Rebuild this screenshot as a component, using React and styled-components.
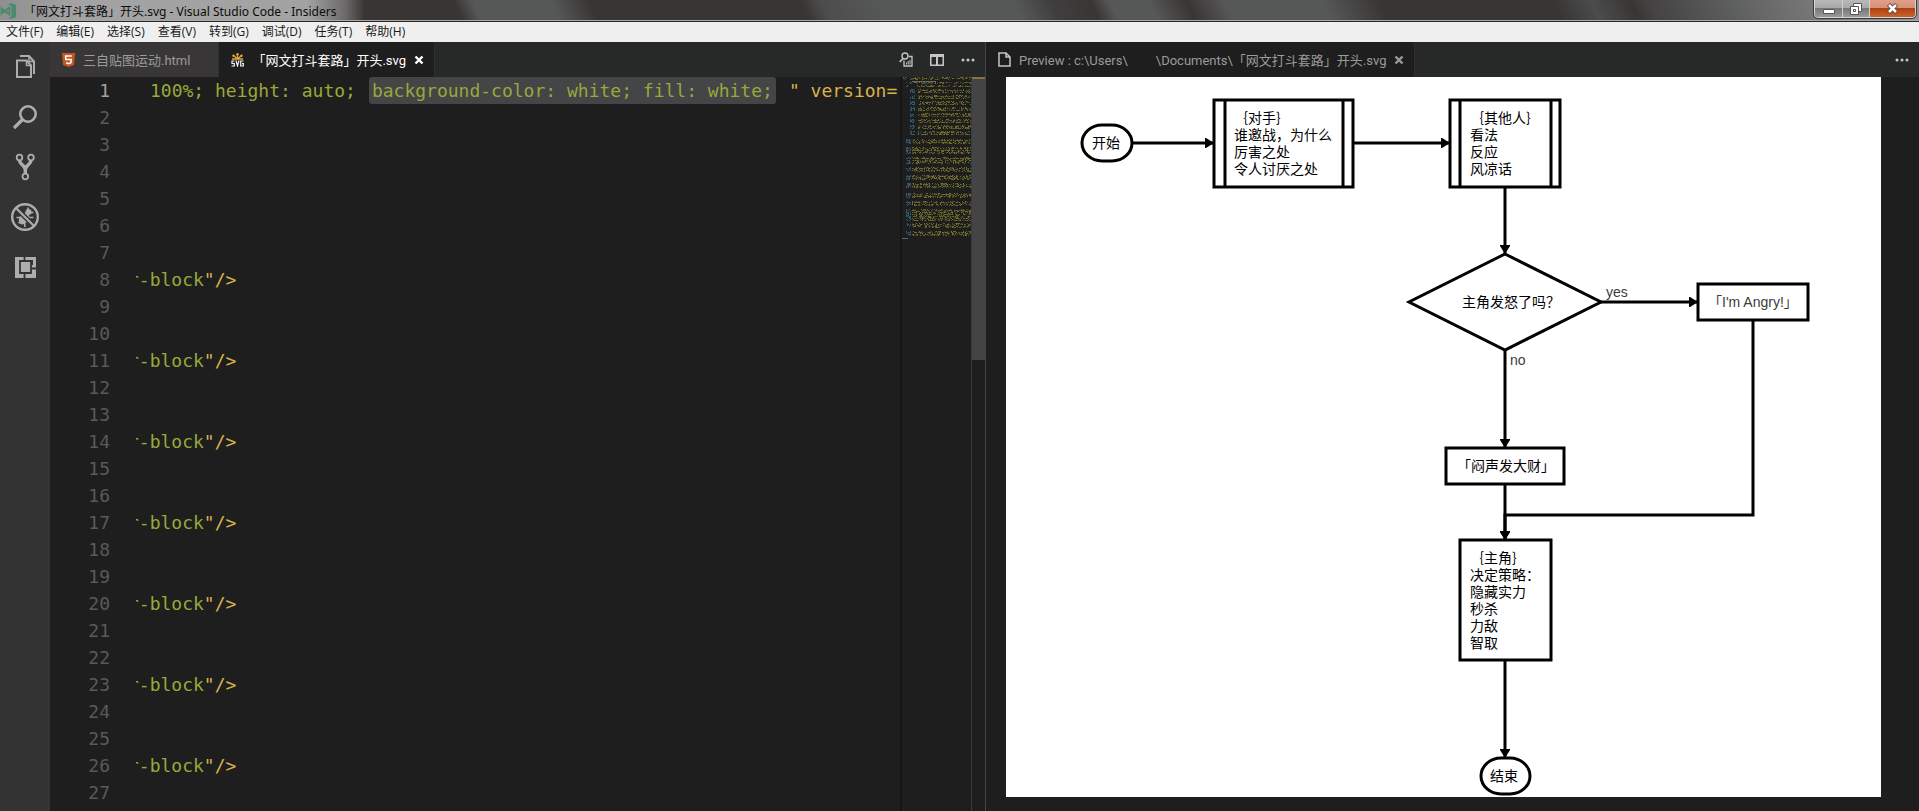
import React from 'react';
import styled, { createGlobalStyle } from 'styled-components';

const GlobalStyle = createGlobalStyle`
  * {
    box-sizing: border-box;
  }

  body {
    margin: 0;
    background: #1e1e1e;
    font-family: 'Open Sans', 'Noto Sans CJK SC', sans-serif;
    font-size: 13px;
  }

  button {
    margin: 0;
    padding: 0;
    border: 0;
    background: none;
    color: inherit;
    font: inherit;
    cursor: pointer;
  }

  svg {
    display: block;
  }
`;

const Window = styled.div`
  display: flex;
  flex-direction: column;
  height: 100vh;
  overflow: hidden;
`;

const TitleBar = styled.header`
  display: flex;
  align-items: flex-start;
  justify-content: space-between;
  flex: none;
  height: 22px;
  padding-right: 3px;
  border-bottom: 1px solid #2a2729;
  box-shadow: inset 0 -1px 0 #a9a9a9;
  background:
    linear-gradient(90deg, #8f8f8f 0, #a3a3a3 4%, #a3a3a3 16%, rgba(140, 140, 140, 0.6) 18%, transparent 19%),
    linear-gradient(
      65deg,
      #3a3535 0, #3a3535 24%, #565857 25%, #565857 29%, #3a3535 31%,
      #3a3535 42%, #4c4c4c 43%, #565857 46%, #565857 53%, #3f3e3e 55%,
      #3a3535 57%, #565857 58%, #565857 60%, #3a3535 62%, #565857 64%,
      #565857 69%, #3a3535 72%, #3a3535 81%, #4b4c4c 83%, #3a3535 85%,
      #454343 86%, #5c5e5d 90%, #707070 93%, #959595 100%
    );
`;

const WindowTitle = styled.div`
  display: flex;
  align-items: center;
  gap: 8px;
  height: 20px;
  padding-top: 2px;
  color: #0c0c0c;
  font-family: 'Noto Sans', 'Noto Sans CJK SC', sans-serif;
  font-size: 12px;
  white-space: nowrap;
`;

const WindowControls = styled.div`
  display: flex;
  height: 18px;
  border: 1px solid #d4d4d4;
  border-top: 0;
  border-radius: 0 0 4px 4px;
  outline: 1px solid #3c3c3c;
  overflow: hidden;
`;

const WindowButton = styled.button`
  display: flex;
  align-items: center;
  justify-content: center;
  width: ${({ $close }) => ($close ? 46 : 27)}px;
  border-left: ${({ $first }) => ($first ? 0 : 1)}px solid #d0d0d0;
  background: ${({ $close }) => ($close
    ? 'linear-gradient(#dfa08c 0, #d79179 45%, #b1410f 50%, #c9642a 100%)'
    : 'linear-gradient(#b9b9b9 0, #a8a8a8 45%, #787878 50%, #9a9a9a 100%)')};
`;

const MenuBar = styled.nav`
  display: flex;
  align-items: center;
  flex: none;
  gap: 13px;
  height: 20px;
  padding-left: 6px;
  background: #efefef;
`;

const MenuItem = styled.button`
  color: #1a1a1a;
  font-size: 12px;
  line-height: 20px;
  white-space: nowrap;
`;

const Workbench = styled.div`
  display: flex;
  flex: 1;
  min-height: 0;
`;

const ActivityBar = styled.nav`
  flex: none;
  width: 50px;
  background: #333333;
`;

const ActivityButton = styled.button`
  display: block;
  width: 50px;
  height: 50px;
  color: #adadad;
`;

const EditorGroup = styled.section`
  display: flex;
  flex: 1 1 2px;
  flex-direction: column;
  min-width: 0;
  background: #1e1e1e;

  & + & {
    flex-basis: 1px;
    border-left: 1px solid #444444;
  }
`;

const TabBar = styled.div`
  display: flex;
  flex: none;
  height: 35px;
  background: #272828;
`;

const Tab = styled.div`
  display: flex;
  align-items: center;
  padding: 0 10px 0 12px;
  gap: 8px;
  border-right: 1px solid #303030;
  background: ${({ $active }) => ($active ? '#1e1e1e' : '#383637')};
  color: ${({ $focused }) => ($focused ? '#ffffff' : '#9b9b9b')};
  font-family: Roboto, 'Noto Sans CJK SC', sans-serif;
`;

const TabLabel = styled.span`
  white-space: pre;
`;

const Redacted = styled.span`
  display: inline-block;
  width: 28px;
`;

const TabIconSlot = styled.span`
  display: flex;
  width: 13px;
`;

const CloseSlot = styled.button`
  width: 10px;
  height: 10px;
  visibility: ${({ $hidden }) => ($hidden ? 'hidden' : 'visible')};
`;

const EditorActions = styled.div`
  display: flex;
  align-items: center;
  gap: 17px;
  margin-left: auto;
  padding-right: 10px;
  color: #c5c5c5;
`;

const EditorBody = styled.div`
  display: flex;
  flex: 1;
  min-height: 0;
`;

const Code = styled.ol`
  flex: 1;
  min-width: 0;
  margin: 0;
  padding: 0;
  overflow: hidden;
  list-style: none;
  font-family: 'DejaVu Sans Mono', monospace;
  font-size: 18px;
  line-height: 27px;
`;

const CodeRow = styled.li`
  display: flex;
  height: 27px;
`;

const LineNumber = styled.span`
  flex: none;
  width: 60px;
  margin-right: 26px;
  color: ${({ $current }) => ($current ? '#a0a0a0' : '#5a5a5a')};
  text-align: right;
`;

const CodeViewport = styled.div`
  flex: 1;
  min-width: 0;
  overflow: hidden;
`;

/* the text is scrolled sideways, so the first glyph is cut by the gutter */
const CodeText = styled.div`
  margin-left: -8px;
  color: #9aa83a;
  white-space: pre;
`;

const StyleAttribute = styled.div`
  display: flex;
  gap: 13px;
  padding-left: 14px;
  color: #9aa83a;
  white-space: pre;
`;

const Selection = styled.span`
  padding: 0 3px;
  border-radius: 3px;
  background: #434547;
`;

const Punctuation = styled.span`
  color: #dab24c;
`;

const MinimapColumn = styled.div`
  flex: none;
  width: 71px;
  border-left: 2px solid #161616;
`;

const ScrollTrack = styled.div`
  flex: none;
  width: 14px;
  border-left: 1px solid #3a3a3a;
`;

const ScrollThumb = styled.div`
  height: 283px;
  border-top: 2px solid #8a7340;
  background: #434445;
`;

const PreviewBody = styled.div`
  display: flex;
  flex: 1;
  min-height: 0;
  padding: 0 38px 14px 20px;
`;

const PreviewPage = styled.div`
  flex: 1;
  min-width: 0;
  overflow: hidden;
  background: #ffffff;
`;

const ChartText = styled.text`
  fill: ${({ $soft }) => ($soft ? '#3c3c3c' : '#000000')};
  font-family: 'Liberation Sans', 'Noto Sans CJK SC', sans-serif;
  font-size: 14px;
  white-space: pre;
`;

const menus = ['文件(F)', '编辑(E)', '选择(S)', '查看(V)', '转到(G)', '调试(D)', '任务(T)', '帮助(H)'];

function AppLogo() {
  return (
    <svg width="16" height="16" viewBox="0 0 16 16">
      <path d="M10.500 0L16 2v12l-5.500 2-2-1 3-1V3l-3-1.500z" fill="#4a8a6c" />
      <path d="M1.500 5.500l8 6V4.500l-8 6z" fill="none" stroke="#4a8a6c" strokeWidth="1.800" />
    </svg>
  );
}

function FilesIcon() {
  return (
    <svg width="50" height="50" fill="none" stroke="currentColor" strokeWidth="2">
      <path d="M17 18.500h9.500l4.500 5V35H17z" />
      <path d="M20 14h9l5 5.500V32" />
      <path d="M29 14v5.500h5" strokeWidth="1.500" />
      <path d="M26.500 18.500v5H31" strokeWidth="1.500" />
    </svg>
  );
}

function SearchIcon() {
  return (
    <svg width="50" height="50" fill="none" stroke="currentColor">
      <circle cx="28" cy="22" r="7.700" strokeWidth="2.600" />
      <path d="M22.500 27.500L14 36" strokeWidth="3.400" />
    </svg>
  );
}

function GitIcon() {
  return (
    <svg width="50" height="50" fill="none" stroke="currentColor">
      <circle cx="19.500" cy="15.500" r="2.800" strokeWidth="1.800" />
      <circle cx="31" cy="15.500" r="2.800" strokeWidth="1.800" />
      <circle cx="25.300" cy="34.500" r="2.800" strokeWidth="1.800" />
      <path d="M19.500 18.500c0 4 5.800 4.500 5.800 9.500v3.500M31 18.500c0 4-5.700 4.500-5.700 9.500" strokeWidth="3.400" />
    </svg>
  );
}

function DebugIcon() {
  return (
    <svg width="50" height="50" fill="none" stroke="currentColor">
      <ellipse cx="24" cy="26.500" rx="4.500" ry="6.500" transform="rotate(35 24 26.500)" fill="currentColor" stroke="none" />
      <circle cx="28.500" cy="20" r="3" fill="currentColor" stroke="none" />
      <path d="M28 15.500v4M33.500 20.500h-4M19 20l4 2M16.500 25.500h5M18.500 31l4-2M25 35l-.5-4M31 31.500l-3-3.500M33.500 25.500h-5" strokeWidth="1.600" />
      <path d="M15.500 15.500l19 19" stroke="#333333" strokeWidth="5" />
      <path d="M15.500 15.500l19 19" strokeWidth="2.200" />
      <circle cx="25" cy="25" r="12.800" strokeWidth="2.400" />
    </svg>
  );
}

function ExtensionsIcon() {
  return (
    <svg width="50" height="50" fill="none" stroke="currentColor">
      <path d="M15 15h21v21H15z" fill="currentColor" stroke="none" />
      <path d="M20 19h11v12H20zM24.500 15v4M24.500 31v5M31 26.500h5" stroke="#333333" strokeWidth="1.800" />
      <path d="M28 18h5v5h-2v-3h-3z" fill="#333333" stroke="none" />
    </svg>
  );
}

const activities = [
  ['资源管理器', FilesIcon],
  ['搜索', SearchIcon],
  ['源代码管理', GitIcon],
  ['调试', DebugIcon],
  ['扩展', ExtensionsIcon],
];

function CloseIcon() {
  return (
    <svg width="10" height="10" viewBox="0 0 10 10">
      <path d="M1.500 1.500l7 7M8.500 1.500l-7 7" stroke="currentColor" strokeWidth="2.400" />
    </svg>
  );
}

function HtmlIcon() {
  return (
    <svg width="13" height="14" viewBox="0 0 13 14">
      <path d="M0 0h13l-1 12-5.500 2L1 12z" fill="#c4571f" />
      <path d="M9.800 3H3.600l.2 3.500h5.400l-.3 3.300-2.400.8-2.400-.8" fill="none" stroke="#ffffff" strokeWidth="1.500" />
    </svg>
  );
}

function SvgFileIcon() {
  return (
    <svg width="13" height="14" viewBox="0 0 13 14">
      <path d="M6.500 6V1M6.500 6L2.500 2.500M6.500 6l4-3.500M6.500 6H1M6.500 6H12" stroke="#e5a33a" strokeWidth="1.300" />
      <g fill="#e5a33a">
        <circle cx="6.500" cy="1.200" r="1.200" />
        <circle cx="2.500" cy="2.800" r="1.200" />
        <circle cx="10.500" cy="2.800" r="1.200" />
      </g>
      <path
        d="M3.500 8H1v2.500h2.300V13H.5M5 7.500l1.500 5.500L8 7.500M12.500 8h-2.800v5h2.600v-2.500H11"
        fill="none"
        stroke="#f2f2f2"
        strokeWidth="1.200"
      />
    </svg>
  );
}

function PageIcon() {
  return (
    <svg width="13" height="15" viewBox="0 0 13 15">
      <path d="M1 1h7l4 4v9H1zM8 1v4h4" fill="none" stroke="#c5c5c5" strokeWidth="1.500" />
    </svg>
  );
}

function PreviewIcon() {
  return (
    <svg width="14" height="15" viewBox="0 0 14 15" fill="none" stroke="currentColor">
      <circle cx="6" cy="4" r="3" strokeWidth="1.400" />
      <path d="M4 6.500L.7 10" strokeWidth="1.800" />
      <path d="M10 4.500h3v9.500H5V8.500" strokeWidth="1.300" />
      <path d="M7.500 12.500v-2M9.200 12.500V9M11 12.500V8" strokeWidth="1" />
    </svg>
  );
}

function SplitIcon() {
  return (
    <svg width="14" height="14" viewBox="0 0 14 14">
      <path d="M0 1h14v12H0zM1.500 4v7.500H6V4zM8 4v7.500h4.500V4z" fill="currentColor" fillRule="evenodd" />
    </svg>
  );
}

function MoreIcon() {
  return (
    <svg width="14" height="4" viewBox="0 0 14 4" fill="currentColor">
      <circle cx="2" cy="2" r="1.500" />
      <circle cx="7" cy="2" r="1.500" />
      <circle cx="12" cy="2" r="1.500" />
    </svg>
  );
}

// [top, height, left edge of tag names, left edge of attributes]
const minimapBlocks = [
  [0, 3, 1, 6], [5, 2, 4, 8], [8, 2, 4, 15],
  ...[12, 18, 24, 30, 36, 42, 48, 54].map((y) => [y, 4, 8, 16]),
  [62, 5, 4, 10], [70, 7, 4, 10], [80, 7, 4, 10], [90, 5, 4, 10],
  [98, 5, 4, 10], [106, 5, 4, 10], [116, 5, 4, 10], [124, 5, 4, 10],
  [132, 12, 4, 10], [146, 5, 4, 10], [154, 5, 4, 10],
];

function buildMinimap() {
  const layers = { '#34566c': '', '#4a5224': '', '#646a2a': '', '#7c682e': '', '#363a22': '' };
  const colors = Object.keys(layers);
  let seed = 7;
  const random = () => {
    seed = (seed * 16807) % 2147483647;
    return seed / 2147483647;
  };
  minimapBlocks.forEach(([top, height, tag, attr]) => {
    for (let y = top; y < top + height; y += 1) {
      for (let x = tag; x < 69; x += 1) {
        if (random() < (y % 2 ? 0.7 : 0.4)) {
          const color = x < attr ? colors[0] : colors[1 + Math.floor(random() * 4)];
          if (x >= attr || x < tag + 5) layers[color] += `M${x} ${y}h1v1h-1z`;
        }
      }
    }
  });
  return layers;
}

const minimapLayers = buildMinimap();

function Minimap() {
  return (
    <svg width="69" height="170" aria-hidden="true">
      {Object.entries(minimapLayers).map(([color, d]) => (
        <path key={color} d={d} fill={color} />
      ))}
      <path d="M0 161h6v1H0z" fill="#5a6670" />
      <path d="M10 4h24v1H10z" fill="#6b6b6b" />
    </svg>
  );
}

function TextLines({ x, y, lines }) {
  return lines.map((line, i) => (
    <ChartText key={line} x={x} y={y + i * 17}>{line}</ChartText>
  ));
}

const arrows = [
  'M126 66h81',
  'M347 66h96',
  'M499 110v66',
  'M595 225h96',
  'M499 273v97',
  'M499 407v55',
  'M747 243v195H499v24',
  'M499 583v97',
];

function Flowchart() {
  return (
    <svg width="875" height="720">
      <defs>
        <marker id="arrow" markerUnits="userSpaceOnUse" markerWidth="9" markerHeight="10" refX="8" refY="5" orient="auto">
          <path d="M0 0h1l8 5-8 5H0z" />
        </marker>
      </defs>

      <g fill="none" stroke="#000000" strokeWidth="3">
        <rect x="76" y="48" width="50" height="36" rx="20" />
        <path d="M208 23h139v87H208zM219 23v87M337 23v87" />
        <path d="M444 23h110v87H444zM454 23v87M545 23v87" />
        <path d="M499 177l96 48-96 48-96-48z" />
        <rect x="692" y="207" width="110" height="36" />
        <rect x="440" y="371" width="118" height="36" />
        <rect x="454" y="463" width="91" height="120" />
        <rect x="475" y="681" width="49" height="36" rx="20" />
        {arrows.map((d) => (
          <path key={d} d={d} markerEnd="url(#arrow)" />
        ))}
      </g>

      <ChartText x="86" y="71">开始</ChartText>
      <TextLines x={228} y={46} lines={['｛对手｝', '谁邀战，为什么', '厉害之处', '令人讨厌之处']} />
      <TextLines x={464} y={46} lines={['｛其他人｝', '看法', '反应', '风凉话']} />
      <ChartText x="456" y="230">主角发怒了吗？</ChartText>
      <ChartText x="600" y="220" $soft>yes</ChartText>
      <ChartText x="504" y="288" $soft>no</ChartText>
      <ChartText x="702" y="230" $soft>「I'm Angry!」</ChartText>
      <ChartText x="451" y="394">「闷声发大财」</ChartText>
      <TextLines x={464} y={486} lines={['｛主角｝', '决定策略：', '隐藏实力', '秒杀', '力敌', '智取']} />
      <ChartText x="484" y="704">结束</ChartText>
    </svg>
  );
}

function CodeLine({ number }) {
  if (number === 1) {
    return (
      <StyleAttribute>
        <span>100%; height: auto;</span>
        <Selection>background-color: white; fill: white;</Selection>
        <span>
          <Punctuation>&quot; version=</Punctuation>
          &quot;
        </span>
      </StyleAttribute>
    );
  }
  if (number >= 8 && number % 3 === 2) {
    return (
      <CodeText>
        r-block
        <Punctuation>&quot;/&gt;</Punctuation>
      </CodeText>
    );
  }
  return null;
}

export default function App() {
  const lineNumbers = Array.from({ length: 27 }, (_, i) => i + 1);

  return (
    <Window>
      <GlobalStyle />
      <TitleBar>
        <WindowTitle>
          <AppLogo />
          「网文打斗套路」开头.svg - Visual Studio Code - Insiders
        </WindowTitle>
        <WindowControls>
          <WindowButton $first aria-label="最小化">
            <svg width="12" height="10">
              <path d="M.5 5.500h11v4H.5z" fill="#ffffff" stroke="#55565a" />
            </svg>
          </WindowButton>
          <WindowButton aria-label="还原">
            <svg width="13" height="12" stroke="#55565a" fill="#ffffff">
              <path d="M3.500.5h8v8h-8z" />
              <path d="M.5 3.500h8v8h-8zM3.500 6.500h2v2h-2z" fillRule="evenodd" />
            </svg>
          </WindowButton>
          <WindowButton $close aria-label="关闭">
            <svg width="13" height="11">
              <path d="M2.500 1.500l8 8M10.500 1.500l-8 8" stroke="#5b4a48" strokeWidth="4.500" />
              <path d="M3 2l7 7M10 2L3 9" stroke="#ffffff" strokeWidth="2.500" />
            </svg>
          </WindowButton>
        </WindowControls>
      </TitleBar>

      <MenuBar>
        {menus.map((menu) => (
          <MenuItem key={menu}>{menu}</MenuItem>
        ))}
      </MenuBar>

      <Workbench>
        <ActivityBar>
          {activities.map(([label, Icon]) => (
            <ActivityButton key={label} aria-label={label}>
              <Icon />
            </ActivityButton>
          ))}
        </ActivityBar>

        <EditorGroup>
          <TabBar>
            <Tab>
              <TabIconSlot><HtmlIcon /></TabIconSlot>
              <TabLabel>三自贴图运动.html</TabLabel>
              <CloseSlot $hidden aria-label="关闭"><CloseIcon /></CloseSlot>
            </Tab>
            <Tab $active $focused>
              <TabIconSlot><SvgFileIcon /></TabIconSlot>
              <TabLabel>「网文打斗套路」开头.svg</TabLabel>
              <CloseSlot aria-label="关闭"><CloseIcon /></CloseSlot>
            </Tab>
            <EditorActions>
              <button type="button" aria-label="打开预览"><PreviewIcon /></button>
              <button type="button" aria-label="拆分编辑器"><SplitIcon /></button>
              <button type="button" aria-label="更多操作"><MoreIcon /></button>
            </EditorActions>
          </TabBar>
          <EditorBody>
            <Code>
              {lineNumbers.map((number) => (
                <CodeRow key={number}>
                  <LineNumber $current={number === 1}>{number}</LineNumber>
                  <CodeViewport>
                    <CodeLine number={number} />
                  </CodeViewport>
                </CodeRow>
              ))}
            </Code>
            <MinimapColumn>
              <Minimap />
            </MinimapColumn>
            <ScrollTrack>
              <ScrollThumb />
            </ScrollTrack>
          </EditorBody>
        </EditorGroup>

        <EditorGroup>
          <TabBar>
            <Tab $active>
              <TabIconSlot><PageIcon /></TabIconSlot>
              <TabLabel>
                Preview : c:\Users\
                <Redacted />
                \Documents\「网文打斗套路」开头.svg
              </TabLabel>
              <CloseSlot aria-label="关闭"><CloseIcon /></CloseSlot>
            </Tab>
            <EditorActions>
              <button type="button" aria-label="更多操作"><MoreIcon /></button>
            </EditorActions>
          </TabBar>
          <PreviewBody>
            <PreviewPage>
              <Flowchart />
            </PreviewPage>
          </PreviewBody>
        </EditorGroup>
      </Workbench>
    </Window>
  );
}
